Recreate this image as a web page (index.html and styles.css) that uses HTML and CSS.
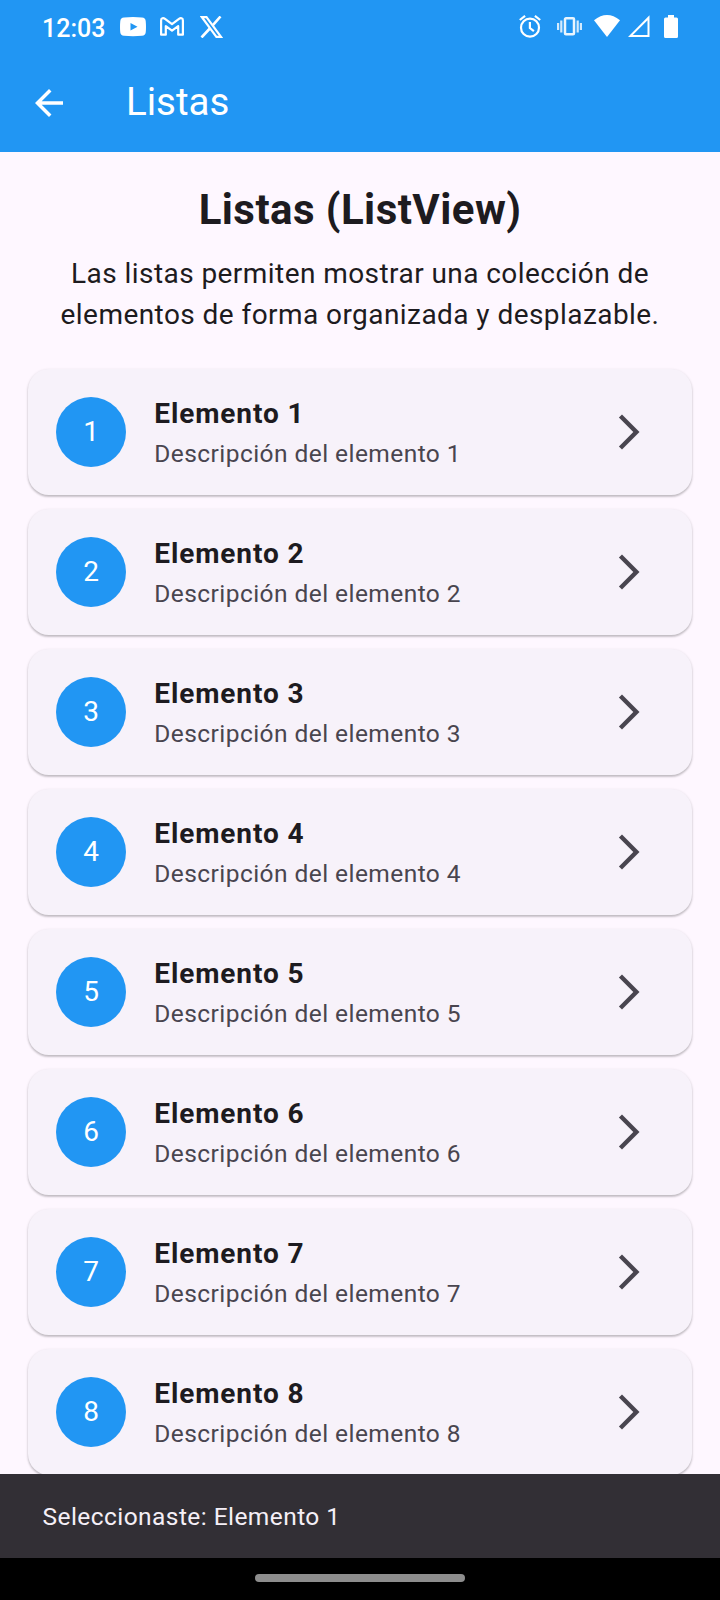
FILE: index.html
```html
<!DOCTYPE html>
<html lang="es">
<head>
<meta charset="utf-8">
<title>Listas</title>
<link rel="stylesheet" href="styles.css">
</head>
<body>
<div class="screen">
  <header class="header">
    <div class="status">
      <span class="clock">12:03</span>
      <svg class="ic-youtube" width="26" height="20" viewBox="0 0 26 20"><path fill="#fff" fill-rule="evenodd" d="M4 .6Q13-.5 22 .6 25.4 1 25.7 4q.6 6 0 11.5-.3 3-3.7 3.300-9 .9-18 0Q.6 18.500 .3 15.500-.3 10 .3 4 .6 1 4 .6zM10.500 6v7.500L17.500 9.800z"/></svg>
      <svg class="ic-gmail" width="24" height="19" viewBox="0 0 24 19"><path fill="none" stroke="#fff" stroke-width="2.200" stroke-linejoin="round" d="M1.100 3.400C1.100 1.100 3.300.600 5 1.900L12 7.200l7-5.300c1.700-1.300 3.900-.8 3.900 1.500V17.700h-4.700V9.200L12 13.600 5.800 9.200V17.700H1.100z"/></svg>
      <svg class="ic-x" width="23" height="22" viewBox="0 0 23 22"><path fill="none" stroke="#fff" stroke-width="2.200" d="M1.900 1.200h4.600L21 20.800h-4.600z"/><path fill="none" stroke="#fff" stroke-width="2.600" d="M20.500.500 12.700 9.400M9.800 12.500 1.500 21.500"/></svg>
      <span class="spacer"></span>
      <svg class="ic-alarm" width="22" height="23" viewBox="0 0 22 23"><g fill="none" stroke="#fff" stroke-width="2.200"><circle cx="11" cy="12.700" r="9"/><path d="M10.900 7v6l4 3.200M.8 5 6.100.900M21.200 5 15.900.900"/></g></svg>
      <svg class="ic-vibrate" width="25" height="19" viewBox="0 0 25 19"><g fill="none" stroke="#fff"><rect x="8" y="1.300" width="9" height="16" rx="1" stroke-width="2.500" opacity=".9"/><path stroke-width="2.200" opacity=".8" d="M1.100 6v7M4.300 3.500v12M20.700 3.500v12M23.900 6v7"/></g></svg>
      <svg class="ic-wifi" width="26" height="22" viewBox="0 0 26 22"><path fill="#fff" d="M0 5.300Q13-5.300 26 5.300L13 22z"/></svg>
      <svg class="ic-signal" width="22" height="22" viewBox="0 0 22 22"><path fill="#fff" fill-rule="evenodd" d="M0 22 21.500.300V22zM4.800 20H19.500V5.200z"/></svg>
      <svg class="ic-battery" width="14" height="23" viewBox="0 0 14 23"><path fill="#fff" d="M4 0h6v2.500h2.500Q14 2.500 14 4v17.500q0 1.500-1.500 1.500h-11Q0 23 0 21.500V4q0-1.500 1.500-1.500H4z"/></svg>
    </div>
    <div class="appbar">
      <svg width="42" height="42" viewBox="0 0 24 24"><path fill="#fff" d="M20 11H7.830l5.590-5.590L12 4l-8 8 8 8 1.410-1.410L7.830 13H20v-2z"/></svg>
      <span class="appbar-title">Listas</span>
    </div>
  </header>
  <main class="content">
    <h1 class="title">Listas (ListView)</h1>
    <p class="intro">Las listas permiten mostrar una colección de<br>elementos de forma organizada y desplazable.</p>
    <div class="list">
      <div class="card"><span class="avatar">1</span><div class="text"><div class="name">Elemento 1</div><div class="desc">Descripción del elemento 1</div></div><svg class="chevron" viewBox="0 0 24 24"><path d="M6.230 20.230 8 22l10-10L8 2 6.230 3.770 14.460 12z"/></svg></div>
      <div class="card"><span class="avatar">2</span><div class="text"><div class="name">Elemento 2</div><div class="desc">Descripción del elemento 2</div></div><svg class="chevron" viewBox="0 0 24 24"><path d="M6.230 20.230 8 22l10-10L8 2 6.230 3.770 14.460 12z"/></svg></div>
      <div class="card"><span class="avatar">3</span><div class="text"><div class="name">Elemento 3</div><div class="desc">Descripción del elemento 3</div></div><svg class="chevron" viewBox="0 0 24 24"><path d="M6.230 20.230 8 22l10-10L8 2 6.230 3.770 14.460 12z"/></svg></div>
      <div class="card"><span class="avatar">4</span><div class="text"><div class="name">Elemento 4</div><div class="desc">Descripción del elemento 4</div></div><svg class="chevron" viewBox="0 0 24 24"><path d="M6.230 20.230 8 22l10-10L8 2 6.230 3.770 14.460 12z"/></svg></div>
      <div class="card"><span class="avatar">5</span><div class="text"><div class="name">Elemento 5</div><div class="desc">Descripción del elemento 5</div></div><svg class="chevron" viewBox="0 0 24 24"><path d="M6.230 20.230 8 22l10-10L8 2 6.230 3.770 14.460 12z"/></svg></div>
      <div class="card"><span class="avatar">6</span><div class="text"><div class="name">Elemento 6</div><div class="desc">Descripción del elemento 6</div></div><svg class="chevron" viewBox="0 0 24 24"><path d="M6.230 20.230 8 22l10-10L8 2 6.230 3.770 14.460 12z"/></svg></div>
      <div class="card"><span class="avatar">7</span><div class="text"><div class="name">Elemento 7</div><div class="desc">Descripción del elemento 7</div></div><svg class="chevron" viewBox="0 0 24 24"><path d="M6.230 20.230 8 22l10-10L8 2 6.230 3.770 14.460 12z"/></svg></div>
      <div class="card"><span class="avatar">8</span><div class="text"><div class="name">Elemento 8</div><div class="desc">Descripción del elemento 8</div></div><svg class="chevron" viewBox="0 0 24 24"><path d="M6.230 20.230 8 22l10-10L8 2 6.230 3.770 14.460 12z"/></svg></div>
    </div>
  </main>
  <div class="snackbar">Seleccionaste: Elemento 1</div>
  <div class="navbar"><span class="pill"></span></div>
</div>
</body>
</html>
```
FILE: styles.css
```css
* { box-sizing: border-box; }
body { margin: 0; font-family: Roboto, "Noto Sans", sans-serif; color: #1d1b20; }
svg { display: block; flex: none; }
.screen { width: 720px; height: 1600px; display: flex; flex-direction: column; overflow: hidden; background: #fef7ff; }
.header { height: 152px; flex: none; background: #2196f3; color: #fff; }
.status { height: 54px; display: flex; align-items: flex-start; padding: 0 42px; }
.clock { width: 78px; padding-top: 14px; font-size: 25px; line-height: 30px; font-weight: 500; }
.spacer { flex: 1; }
.ic-youtube { margin-top: 17px; }
.ic-gmail { margin: 17px 0 0 14px; }
.ic-x { margin: 16px 0 0 16px; }
.ic-alarm { margin: 15px 16px 0 0; }
.ic-vibrate { margin: 17px 12px 0 0; }
.ic-wifi { margin: 15px 8px 0 0; }
.ic-signal { margin: 15px 14px 0 0; }
.ic-battery { margin: 15px 0 0; }
.appbar { height: 98px; display: flex; align-items: center; padding-left: 28px; }
.appbar-title { margin-left: 56px; font-size: 38.5px; line-height: 49px; padding-bottom: 4px; }
.content { flex: 1; min-height: 0; overflow: hidden; padding: 30px 28px 0; }
.title { margin: 0; font-size: 42px; line-height: 56px; font-weight: 700; letter-spacing: 0.4375px; text-align: center; }
.intro { margin: 15px 0 0; font-size: 28px; line-height: 41px; letter-spacing: 0.4375px; text-align: center; }
.list { display: flex; flex-direction: column; gap: 14px; margin-top: 34px; }
.card { height: 126px; flex: none; display: flex; align-items: center; padding: 0 42px 0 28px; border-radius: 21px; background: #f7f2fa; box-shadow: 0 1px 3px rgba(0,0,0,.16), 0 2px 2px rgba(0,0,0,.14); }
.avatar { width: 70px; height: 70px; flex: none; border-radius: 50%; background: #2196f3; color: #fff; font-size: 28px; font-weight: 450; line-height: 70px; text-align: center; }
.text { flex: 1; margin-left: 28.3px; }
.name { font-size: 28px; line-height: 40px; font-weight: 700; letter-spacing: 0.875px; }
.desc { padding-top: 3px; font-size: 24.5px; line-height: 34px; letter-spacing: 0.4375px; color: #49454f; }
.chevron { width: 42px; height: 42px; fill: #49454f; }
.snackbar { height: 84px; flex: none; padding: 1px 0 0 42.5px; background: #322f35; color: #f5eff7; font-size: 24.5px; line-height: 84px; letter-spacing: 0.4375px; }
.navbar { height: 42px; flex: none; display: flex; justify-content: center; padding-top: 16px; background: #000; }
.pill { width: 210px; height: 8px; border-radius: 4px; background: #8d8d8d; }
```
